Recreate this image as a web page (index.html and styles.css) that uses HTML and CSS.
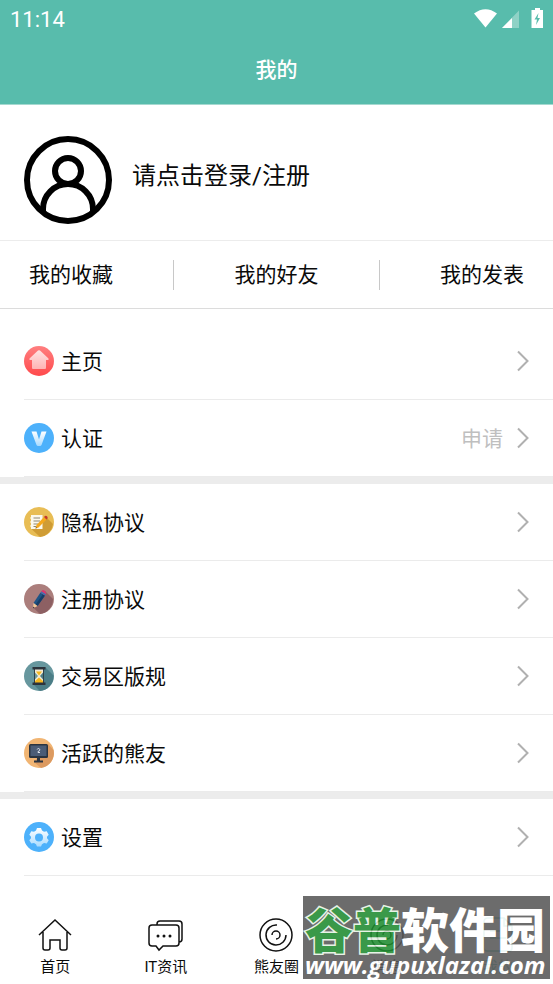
FILE: index.html
```html
<!DOCTYPE html>
<html lang="zh-CN">
<head>
<meta charset="utf-8">
<meta name="viewport" content="width=device-width, initial-scale=1">
<title>我的</title>
<link rel="stylesheet" href="styles.css">
</head>
<body>
<div class="screen">
  <header class="top">
    <div class="status">
      <span class="clock">11:14</span>
      <svg class="status-icons" width="72" height="22" viewBox="0 0 72 22" aria-hidden="true">
        <path d="M0 5.500Q11.500 -3 23 5.500L11.500 19.500Z" fill="#fff"/>
        <path d="M28 20 45 2.500V20Z" fill="#8fd2c6"/>
        <path d="M28 20 38 10V20Z" fill="#fff"/>
        <path d="M58.500 2h2.500V0h5v2H69v18H57.500V2Z" fill="#fff"/>
        <path d="M64.500 5 60.500 11.500H63L62 17 66 10H63.500Z" fill="#58bcac"/>
      </svg>
    </div>
    <h1 class="title">我的</h1>
  </header>

  <main class="content">
    <a class="profile" href="#login">
      <svg class="avatar" width="88" height="88" viewBox="0 0 88 88" fill="none" stroke="#000" stroke-width="6" aria-hidden="true">
        <circle cx="44" cy="44" r="41"/>
        <circle cx="44" cy="35" r="13"/>
        <path d="M19 76V73A25 25 0 0 1 69 73V76"/>
      </svg>
      <span>请点击登录/注册</span>
    </a>

    <nav class="tabs">
      <a href="#favorites">我的收藏</a>
      <span class="divider"></span>
      <a href="#friends">我的好友</a>
      <span class="divider"></span>
      <a href="#posts">我的发表</a>
    </nav>

    <section class="group group-first">
      <a class="row" href="#home">
        <svg class="row-icon" viewBox="0 0 30 30" aria-hidden="true">
          <defs>
            <linearGradient id="red" x2="0" y2="1"><stop stop-color="#ff7f80"/><stop offset="1" stop-color="#ff4a4c"/></linearGradient>
            <linearGradient id="pink" x2="0" y2="1"><stop stop-color="#ffe3e3"/><stop offset="1" stop-color="#ffb3b3"/></linearGradient>
          </defs>
          <circle cx="15" cy="15" r="15" fill="url(#red)"/>
          <path d="M14 4.600Q15 3.700 16 4.600L24.500 12.500V14H22V22Q22 23 21 23H9Q8 23 8 22V14H5.500V12.500Z" fill="url(#pink)"/>
        </svg>
        <span class="label">主页</span>
        <svg class="chevron" viewBox="0 0 12 22" aria-hidden="true"><path d="M1 1.500 10.500 11 1 20.500"/></svg>
      </a>
      <a class="row" href="#verify">
        <svg class="row-icon" viewBox="0 0 30 30" aria-hidden="true">
          <defs><linearGradient id="ice" x2="0" y2="1"><stop stop-color="#fff"/><stop offset="1" stop-color="#a9dbff"/></linearGradient></defs>
          <circle cx="15" cy="15" r="15" fill="#4db1fb"/>
          <path d="M7.500 8.500H12.500L15 16.500 17.500 8.500H22.500L17.500 22Q17 23 16 23H14Q13 23 12.500 22Z" fill="url(#ice)"/>
        </svg>
        <span class="label">认证</span>
        <span class="hint">申请</span>
        <svg class="chevron" viewBox="0 0 12 22" aria-hidden="true"><path d="M1 1.500 10.500 11 1 20.500"/></svg>
      </a>
    </section>

    <section class="group">
      <a class="row" href="#privacy">
        <svg class="row-icon" viewBox="0 0 30 30" aria-hidden="true">
          <circle cx="15" cy="15" r="15" fill="#e8bd55"/>
          <path d="M22 10 29 17A15 15 0 0 1 16 30L7 21.500Z" fill="#cf9c35"/>
          <path d="M7 8H18.500V22H7V20L6 19 7 18V16L6 15 7 14V12L6 11 7 10Z" fill="#fbf8ec"/>
          <path d="M9.500 11H16M9.500 14H16M9.500 17H14M9.500 19.500H12.500" stroke="#8d8672" stroke-width="1"/>
          <path d="M20 10 22.500 12.500 14.500 20.500 11.500 21.500 12.500 18Z" fill="#f5a81c"/>
          <path d="M20 10 21 9Q22 8.200 23 9.200T23.500 11.500L22.500 12.500Z" fill="#c4372c"/>
          <path d="M12 20 11.500 21.500 13 21Z" fill="#53402c"/>
        </svg>
        <span class="label">隐私协议</span>
        <svg class="chevron" viewBox="0 0 12 22" aria-hidden="true"><path d="M1 1.500 10.500 11 1 20.500"/></svg>
      </a>
      <a class="row" href="#terms">
        <svg class="row-icon" viewBox="0 0 30 30" aria-hidden="true">
          <circle cx="15" cy="15" r="15" fill="#ab7e7c"/>
          <path d="M21 7 29 15A15 15 0 0 1 16 30L9 23.500Z" fill="#8d6063"/>
          <path d="M16.500 8.500 21 11.500 13.500 22 9.500 19Z" fill="#1f5485"/>
          <path d="M19 10.200 21 11.500 13.500 22 11.500 20.500Z" fill="#163d68"/>
          <path d="M16.500 8.500 18 6.500Q19 5.500 20.500 6.500T22 9.500L21 11.500Z" fill="#d9376e"/>
          <path d="M16.500 8.500 17.300 7.400 21.900 10.200 21 11.500Z" fill="#3478b5"/>
          <path d="M9.500 19 13.500 22 9 24.500Z" fill="#f0c797"/>
          <path d="M9.200 22.800 10.700 23.600 9 24.500Z" fill="#2b2b36"/>
        </svg>
        <span class="label">注册协议</span>
        <svg class="chevron" viewBox="0 0 12 22" aria-hidden="true"><path d="M1 1.500 10.500 11 1 20.500"/></svg>
      </a>
      <a class="row" href="#rules">
        <svg class="row-icon" viewBox="0 0 30 30" aria-hidden="true">
          <circle cx="15" cy="15" r="15" fill="#67979e"/>
          <path d="M21 6 29.500 14.500A15 15 0 0 1 16 30L9 23Z" fill="#4b7d86"/>
          <path d="M10.500 8H19.500V11L16 15 19.500 19V22H10.500V19L14 15 10.500 11Z" fill="#f2ead6"/>
          <path d="M12 10.500H18L15 14.500ZM15 16.500 19 20V22H11V20Z" fill="#f5b81f"/>
          <path d="M10.500 8V22M19.500 8V22" stroke="#324149" stroke-width="1"/>
          <path d="M8.500 6H21.500V8.500H8.500ZM8.500 21.500H21.500V24H8.500Z" fill="#2c333b"/>
        </svg>
        <span class="label">交易区版规</span>
        <svg class="chevron" viewBox="0 0 12 22" aria-hidden="true"><path d="M1 1.500 10.500 11 1 20.500"/></svg>
      </a>
      <a class="row" href="#active">
        <svg class="row-icon" viewBox="0 0 30 30" aria-hidden="true">
          <circle cx="15" cy="15" r="15" fill="#f1b573"/>
          <path d="M24 6 29.500 12A15 15 0 0 1 17 30L10 24Z" fill="#dc9a60"/>
          <rect x="5" y="6" width="19" height="14" rx="1.500" fill="#2b3440"/>
          <rect x="6.500" y="7.500" width="16" height="10.500" fill="#4b5c76"/>
          <path d="M13 20H16V22.500H19V24.500H10V22.500H13Z" fill="#2b3440"/>
          <path d="M13.200 11.500Q13.500 10.500 14.500 10.500T15.800 11.700 14 13.500V14.500H16" stroke="#dde3ec" fill="none"/>
        </svg>
        <span class="label">活跃的熊友</span>
        <svg class="chevron" viewBox="0 0 12 22" aria-hidden="true"><path d="M1 1.500 10.500 11 1 20.500"/></svg>
      </a>
    </section>

    <section class="group">
      <a class="row" href="#settings">
        <svg class="row-icon" viewBox="0 0 30 30" aria-hidden="true">
          <circle cx="15" cy="15" r="15" fill="#4db1fb"/>
          <path fill="url(#ice)" fill-rule="evenodd" d="M13 6H17L18 8.500 20 9.700 22.700 9.200 24.700 12.700 23 14.800V16.200L24.700 18.300 22.700 21.500 20 21 18 22.200 17 24.500H13L12 22.200 10 21 7.300 21.500 5.300 18.300 7 16.200V14.800L5.300 12.700 7.300 9.200 10 9.700 12 8.500ZM15 11.500A4 4 0 1 0 15 19.500 4 4 0 1 0 15 11.500Z"/>
        </svg>
        <span class="label">设置</span>
        <svg class="chevron" viewBox="0 0 12 22" aria-hidden="true"><path d="M1 1.500 10.500 11 1 20.500"/></svg>
      </a>
    </section>
  </main>

  <footer class="bottom">
    <nav class="bar">
      <a href="#index">
        <svg class="bar-icon" viewBox="0 0 36 36" aria-hidden="true"><path d="M2 18 18 3 34 18M6 15V31Q6 33 8 33H11Q13 33 13 31V23H23V31Q23 33 25 33H28Q30 33 30 31V15"/></svg>
        <span>首页</span>
      </a>
      <a href="#news">
        <svg class="bar-icon" viewBox="0 0 36 36" aria-hidden="true"><path d="M4 8H28Q31 8 31 11V26Q31 29 28 29H15L11 33 8 29H4Q1 29 1 26V11Q1 8 4 8ZM9 8V7Q9 4 12 4H31Q34 4 34 7V22Q34 25 31 25"/><g fill="#111" stroke="none"><circle cx="10" cy="19" r="1.500"/><circle cx="16" cy="19" r="1.500"/><circle cx="22" cy="19" r="1.500"/></g></svg>
        <span>IT资讯</span>
      </a>
      <a href="#circle">
        <svg class="bar-icon" viewBox="0 0 36 36" aria-hidden="true"><circle cx="18" cy="18" r="16"/><path d="M19 8A10 10 0 1 0 28 18M14 18A4 4 0 1 1 18 22"/></svg>
        <span>熊友圈</span>
      </a>
      <a href="#messages">
        <svg class="bar-icon" viewBox="0 0 36 36" aria-hidden="true"><circle cx="18" cy="18" r="16"/><path d="M19 8A10 10 0 1 0 28 18M14 18A4 4 0 1 1 18 22"/></svg>
        <span>消息</span>
      </a>
      <a class="active" href="#me">
        <svg class="bar-icon" viewBox="0 0 36 36" aria-hidden="true"><path d="M8 1H24L32 9V31Q32 34 29 34H7Q4 34 4 31V5Q4 1 8 1ZM24 1V9H32M10 14H20M10 21H26"/></svg>
        <span>我的</span>
      </a>
    </nav>
    <div class="mark">
      <div class="mark-name"><span class="green">谷普</span>软件园</div>
      <div class="mark-url">www.gupuxlazal.com</div>
    </div>
  </footer>
</div>
</body>
</html>
```

FILE: styles.css
```css
* { box-sizing: border-box; }

body {
  margin: 0;
  background: #fff;
  color: #0a0a0a;
  font-family: Roboto, "Noto Sans CJK SC", sans-serif;
  font-size: 21px;
}

a { color: inherit; text-decoration: none; }
svg { display: block; flex: none; }

.screen {
  min-height: 100vh;
  display: flex;
  flex-direction: column;
}

.top {
  background: #58bcac;
  color: #fff;
  border-bottom: 1px solid #a5d9d0;
}

.status {
  display: flex;
  align-items: center;
  justify-content: space-between;
  height: 38px;
  padding: 0 7px 0 10px;
}

.clock { font-size: 22px; }

.title {
  margin: 0;
  height: 66px;
  line-height: 64px;
  text-align: center;
  font-size: 21px;
  font-weight: 500;
}

.content { flex: 1; }

.profile {
  display: flex;
  align-items: center;
  gap: 20px;
  height: 135px;
  padding: 15px 24px 0;
  font-size: 24px;
  line-height: 36px;
}

.profile span { padding-bottom: 8px; }

.tabs {
  display: flex;
  align-items: center;
  justify-content: space-between;
  height: 69px;
  padding: 0 29px;
  border-top: 1px solid #ececec;
  border-bottom: 1px solid #dcdcdc;
}

.tabs a { padding-bottom: 4px; }

.divider { width: 1px; height: 30px; background: #c8c8c8; }

.group + .group { border-top: 7px solid #ececec; }
.group-first { padding-top: 14px; }

.row {
  display: flex;
  align-items: center;
  height: 77px;
  margin-left: 24px;
  padding-right: 24px;
  border-bottom: 1px solid #ebebeb;
}

.row-icon { width: 30px; height: 30px; }
.label { flex: 1; padding: 0 0 2px 7px; }
.hint { color: #bfbfbf; padding: 0 14px 2px 0; }

.chevron {
  width: 12px;
  height: 22px;
  fill: none;
  stroke: #b0b0b0;
  stroke-width: 2;
}

.bottom { position: relative; }

.bar {
  display: flex;
  height: 67px;
  font-size: 15px;
  line-height: 20px;
}

.bar a {
  flex: 1;
  display: flex;
  flex-direction: column;
  align-items: center;
  gap: 4px;
}

.bar-icon {
  width: 36px;
  height: 36px;
  fill: none;
  stroke: #111;
  stroke-width: 1.5px;
}

.active { color: #58bcac; }
.active .bar-icon { stroke: #58bcac; }

.mark {
  position: absolute;
  right: 3px;
  bottom: 5px;
  width: 247px;
  height: 83px;
  background: #585858;
  color: #fff;
  opacity: 0.88;
  white-space: nowrap;
}

.mark-name {
  padding-left: 2px;
  height: 56px;
  line-height: 62px;
  font-family: "Noto Sans CJK SC", sans-serif;
  font-size: 48px;
  font-weight: 900;
}

.green {
  color: #1f8c30;
  -webkit-text-stroke: 3px #e4f2e4;
  paint-order: stroke fill;
}

.mark-url {
  padding-left: 2px;
  height: 26px;
  line-height: 26px;
  font-family: "Open Sans", sans-serif;
  font-size: 24px;
  font-weight: 700;
  font-style: italic;
}
```
